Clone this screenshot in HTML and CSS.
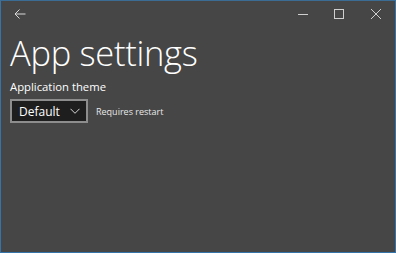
FILE: index.html
```html
<!DOCTYPE html>
<html lang="en">
  <head>
    <meta charset="UTF-8" />
    <meta name="viewport" content="width=device-width, initial-scale=1.0" />
    <title>App settings</title>
    <link rel="stylesheet" href="styles.css">
  </head>
  <body>
    <div class="window">
      <div class="title-bar">
        <button class="back-button" aria-label="Back">
          <svg width="12" height="10" viewBox="0 0 12 10">
            <path d="M11.5 5H1.2M5.5 0.5L1 5l4.5 4.5" fill="none" stroke="#d8d8d8" stroke-width="1"/>
          </svg>
        </button>
        <div class="caption-buttons">
          <button class="caption" aria-label="Minimize">
            <svg width="10" height="10" viewBox="0 0 10 10">
              <path d="M0 5.5h10" stroke="#cfcfcf" stroke-width="1"/>
            </svg>
          </button>
          <button class="caption" aria-label="Maximize">
            <svg width="10" height="10" viewBox="0 0 10 10">
              <rect x="0.5" y="0.5" width="9" height="9" fill="none" stroke="#cfcfcf" stroke-width="1"/>
            </svg>
          </button>
          <button class="caption" aria-label="Close">
            <svg width="10" height="10" viewBox="0 0 10 10">
              <path d="M0 0l10 10M10 0L0 10" stroke="#cfcfcf" stroke-width="1"/>
            </svg>
          </button>
        </div>
      </div>
      <div class="content">
        <h1>App settings</h1>
        <div class="setting-label">Application theme</div>
        <div class="setting-row">
          <div class="combo">
            <span>Default</span>
            <svg width="10" height="6" viewBox="0 0 10 6">
              <path d="M0.5 0.8l4.5 4.5L9.5 0.8" fill="none" stroke="#d8d8d8" stroke-width="1"/>
            </svg>
          </div>
          <span class="note">Requires restart</span>
        </div>
      </div>
    </div>
  </body>
</html>
```
FILE: styles.css
```css
html, body {
  margin: 0;
  height: 100%;
}
body {
  font-family: "Open Sans", "Noto Sans", sans-serif;
  background-color: #454545;
  color: white;
}
.window {
  box-sizing: border-box;
  height: 100%;
  border: 1px solid #3574a8;
  border-top-color: #3a6c94;
  background-color: #464646;
}
.title-bar {
  display: flex;
  justify-content: space-between;
  align-items: center;
  height: 25px;
}
button {
  background: none;
  border: none;
  padding: 0;
  display: flex;
  align-items: center;
  justify-content: center;
}
.back-button {
  width: 38px;
  height: 25px;
}
.caption-buttons {
  display: flex;
}
.caption {
  width: 36px;
  height: 25px;
}
.caption:last-child {
  width: 38px;
}
.content {
  padding: 0 9px;
}
h1 {
  margin: 5px 0 0;
  font-weight: 300;
  font-size: 34.5px;
  line-height: 44px;
  letter-spacing: -0.3px;
}
.setting-label {
  font-size: 11.3px;
  line-height: 15px;
  margin-top: 4px;
}
.setting-row {
  display: flex;
  align-items: center;
  gap: 8px;
  margin-top: 5px;
}
.combo {
  box-sizing: border-box;
  width: 78px;
  height: 24px;
  border: 2px solid #8d8d8d;
  background-color: #1e1e1e;
  display: flex;
  align-items: center;
  justify-content: space-between;
  padding: 0 6px 0 7px;
  font-size: 12px;
}
.note {
  font-size: 9px;
  color: #e8e8e8;
}
```
